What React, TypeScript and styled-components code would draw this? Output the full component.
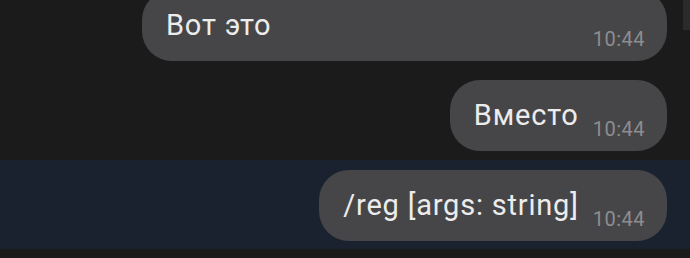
import React from "react";
import styled, { createGlobalStyle } from "styled-components";

const Global = createGlobalStyle`
  html, body {
    margin: 0;
    padding: 0;
    background: #1b1b1b;
    overflow: hidden;
  }
  body {
    font-family: Roboto, "Noto Sans", sans-serif;
  }
`;

const Screen = styled.div`
  position: relative;
  width: 690px;
  height: 258px;
  overflow: hidden;
  background: #1b1b1b;
  display: flex;
  flex-direction: column;
`;

const Row = styled.div<{ $shift?: number; $top: number; $bottom: number; $highlight?: boolean }>`
  display: flex;
  justify-content: flex-end;
  margin-top: ${(p) => p.$shift ?? 0}px;
  padding-top: ${(p) => p.$top}px;
  padding-bottom: ${(p) => p.$bottom}px;
  padding-right: 23px;
  background: ${(p) => (p.$highlight ? "#19222e" : "transparent")};
`;

const Bubble = styled.div<{ $width?: number }>`
  display: flex;
  align-items: flex-end;
  justify-content: space-between;
  box-sizing: border-box;
  ${(p) => (p.$width ? `width: ${p.$width}px;` : "")}
  height: 71px;
  padding: 18px 22px 11px 24px;
  background: #464648;
  border-radius: 30px;
`;

const Text = styled.span`
  font-size: 29px;
  line-height: 34px;
  letter-spacing: 0.8px;
  color: #ececec;
  margin-bottom: 8px;
  white-space: nowrap;
`;

const Time = styled.span`
  font-size: 20px;
  line-height: 22px;
  letter-spacing: 0.5px;
  color: #8d8d90;
  margin-left: 14px;
  white-space: nowrap;
`;

const Scrollbar = styled.div`
  position: absolute;
  right: 0;
  top: 0;
  width: 7px;
  height: 30px;
  background: #2b2b2c;
`;

export default function App() {
  return (
    <>
      <Global />
      <Screen>
        <Row $shift={-10} $top={0} $bottom={19}>
          <Bubble $width={525}>
            <Text>Вот это</Text>
            <Time>10:44</Time>
          </Bubble>
        </Row>
        <Row $top={0} $bottom={9}>
          <Bubble>
            <Text>Вместо</Text>
            <Time>10:44</Time>
          </Bubble>
        </Row>
        <Row $top={10} $bottom={8} $highlight>
          <Bubble>
            <Text>/reg [args: string]</Text>
            <Time>10:44</Time>
          </Bubble>
        </Row>
        <Scrollbar />
      </Screen>
    </>
  );
}
